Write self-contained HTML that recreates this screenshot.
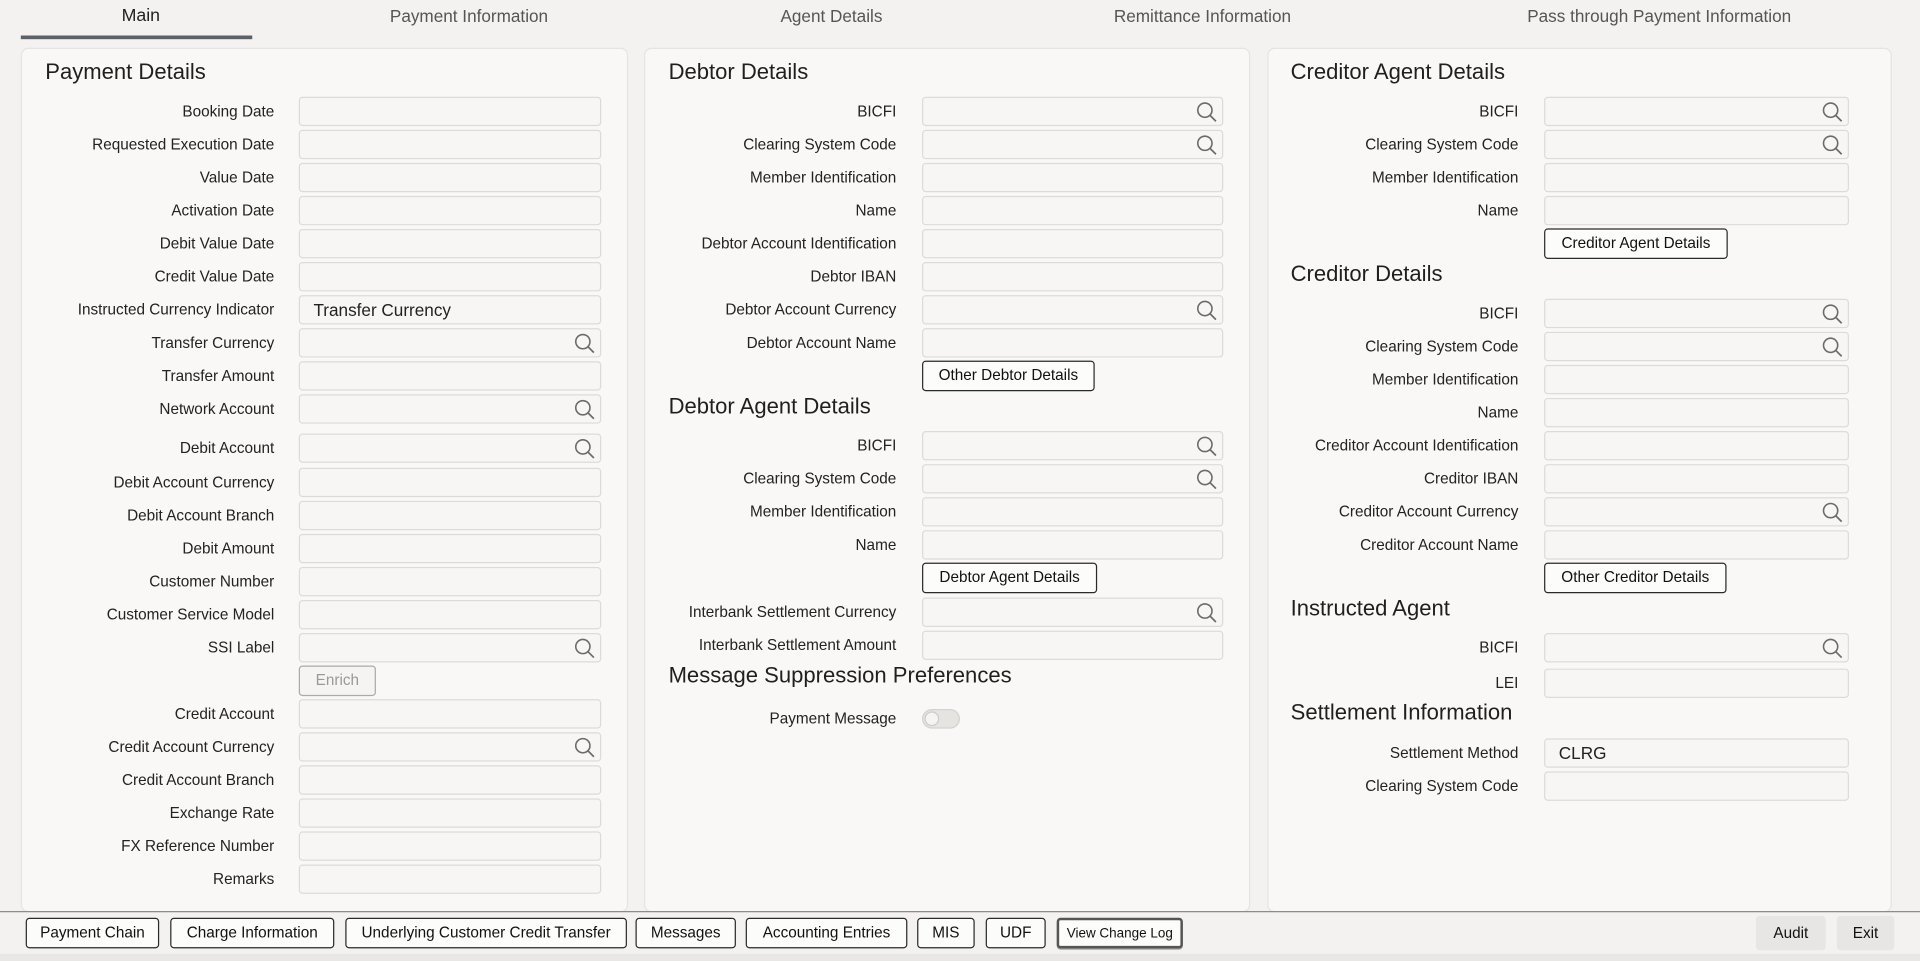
<!DOCTYPE html>
<html><head><meta charset="utf-8"><style>
html,body{margin:0;padding:0;width:1920px;height:961px;overflow:hidden;background:#f3f2f0;font-family:"Liberation Sans",sans-serif;}
#w{position:absolute;left:0;top:0;width:1568px;height:785px;transform:scale(1.22449);transform-origin:0 0;}
.a{position:absolute}
.tab{position:absolute;top:5px;font-size:14px;color:#555;transform:translateX(-50%);white-space:nowrap}
.p{position:absolute;top:39px;height:704px;background:#f9f8f6;border:1px solid #e6e4e0;border-radius:6px}
.h{position:absolute;font-size:18px;color:#1f1f1f;white-space:nowrap;transform:translateY(-50%)}
.l{position:absolute;font-size:12.5px;color:#222;text-align:right;white-space:nowrap;transform:translateY(-50%)}
.i{position:absolute;height:24px;background:#f7f6f4;border:1px solid #dddbd7;border-radius:3px;transform:translateY(-50%);box-sizing:border-box;font-size:14px;color:#222;padding-left:11px;line-height:22px}
.s{position:absolute;right:4px;top:3px;width:17px;height:17px}
.b{position:absolute;height:25px;border:1px solid #2a2a2a;border-radius:3px;background:#fcfcfb;font-size:12.5px;color:#111;text-align:center;line-height:23px;transform:translateY(-50%);box-sizing:border-box;white-space:nowrap}
</style></head><body><div id="w">
<svg width="0" height="0" style="position:absolute"><defs><symbol id="q" viewBox="0 0 17 17"><circle cx="7" cy="7" r="5.8" fill="none" stroke="#6b6b6b" stroke-width="1.3"/><line x1="11.2" y1="11.2" x2="16" y2="16" stroke="#6b6b6b" stroke-width="1.4"/></symbol></defs></svg>
<div class="tab" style="left:115px;color:#222;font-size:14.5px">Main</div>
<div class="a" style="left:17px;top:29px;width:189px;height:3px;background:#5b606b"></div>
<div class="tab" style="left:383px">Payment Information</div>
<div class="tab" style="left:679px">Agent Details</div>
<div class="tab" style="left:982px">Remittance Information</div>
<div class="tab" style="left:1355px">Pass through Payment Information</div>

<div class="p" style="left:17px;width:494px"></div>
<div class="p" style="left:526px;width:493px"></div>
<div class="p" style="left:1035px;width:508px"></div>

<div class="h" style="left:37px;top:59px">Payment Details</div>
<div style="position:absolute;left:0;top:0;width:224px">
<div class="l" style="right:0;top:91px">Booking Date</div>
<div class="l" style="right:0;top:118px">Requested Execution Date</div>
<div class="l" style="right:0;top:145px">Value Date</div>
<div class="l" style="right:0;top:172px">Activation Date</div>
<div class="l" style="right:0;top:199px">Debit Value Date</div>
<div class="l" style="right:0;top:226px">Credit Value Date</div>
<div class="l" style="right:0;top:253px">Instructed Currency Indicator</div>
<div class="l" style="right:0;top:280px">Transfer Currency</div>
<div class="l" style="right:0;top:307px">Transfer Amount</div>
<div class="l" style="right:0;top:334px">Network Account</div>
<div class="l" style="right:0;top:366px">Debit Account</div>
<div class="l" style="right:0;top:394px">Debit Account Currency</div>
<div class="l" style="right:0;top:421px">Debit Account Branch</div>
<div class="l" style="right:0;top:448px">Debit Amount</div>
<div class="l" style="right:0;top:475px">Customer Number</div>
<div class="l" style="right:0;top:502px">Customer Service Model</div>
<div class="l" style="right:0;top:529px">SSI Label</div>
<div class="l" style="right:0;top:583px">Credit Account</div>
<div class="l" style="right:0;top:610px">Credit Account Currency</div>
<div class="l" style="right:0;top:637px">Credit Account Branch</div>
<div class="l" style="right:0;top:664px">Exchange Rate</div>
<div class="l" style="right:0;top:691px">FX Reference Number</div>
<div class="l" style="right:0;top:718px">Remarks</div>
</div>
<div style="position:absolute;left:244px;top:0;width:247px">
<div class="i" style="left:0;width:247px;top:91px"></div>
<div class="i" style="left:0;width:247px;top:118px"></div>
<div class="i" style="left:0;width:247px;top:145px"></div>
<div class="i" style="left:0;width:247px;top:172px"></div>
<div class="i" style="left:0;width:247px;top:199px"></div>
<div class="i" style="left:0;width:247px;top:226px"></div>
<div class="i" style="left:0;width:247px;top:253px">Transfer Currency</div>
<div class="i" style="left:0;width:247px;top:280px"><svg class="s"><use href="#q"/></svg></div>
<div class="i" style="left:0;width:247px;top:307px"></div>
<div class="i" style="left:0;width:247px;top:334px"><svg class="s"><use href="#q"/></svg></div>
<div class="i" style="left:0;width:247px;top:366px"><svg class="s"><use href="#q"/></svg></div>
<div class="i" style="left:0;width:247px;top:394px"></div>
<div class="i" style="left:0;width:247px;top:421px"></div>
<div class="i" style="left:0;width:247px;top:448px"></div>
<div class="i" style="left:0;width:247px;top:475px"></div>
<div class="i" style="left:0;width:247px;top:502px"></div>
<div class="i" style="left:0;width:247px;top:529px"><svg class="s"><use href="#q"/></svg></div>
<div class="b" style="left:0;width:63px;top:556px;border-color:#aaa;color:#999;background:#f5f4f2">Enrich</div>
<div class="i" style="left:0;width:247px;top:583px"></div>
<div class="i" style="left:0;width:247px;top:610px"><svg class="s"><use href="#q"/></svg></div>
<div class="i" style="left:0;width:247px;top:637px"></div>
<div class="i" style="left:0;width:247px;top:664px"></div>
<div class="i" style="left:0;width:247px;top:691px"></div>
<div class="i" style="left:0;width:247px;top:718px"></div>
</div>

<div class="h" style="left:546px;top:59px">Debtor Details</div>
<div class="h" style="left:546px;top:332px">Debtor Agent Details</div>
<div class="h" style="left:546px;top:552px">Message Suppression Preferences</div>
<div style="position:absolute;left:0;top:0;width:732px">
<div class="l" style="right:0;top:91px">BICFI</div>
<div class="l" style="right:0;top:118px">Clearing System Code</div>
<div class="l" style="right:0;top:145px">Member Identification</div>
<div class="l" style="right:0;top:172px">Name</div>
<div class="l" style="right:0;top:199px">Debtor Account Identification</div>
<div class="l" style="right:0;top:226px">Debtor IBAN</div>
<div class="l" style="right:0;top:253px">Debtor Account Currency</div>
<div class="l" style="right:0;top:280px">Debtor Account Name</div>
<div class="l" style="right:0;top:364px">BICFI</div>
<div class="l" style="right:0;top:391px">Clearing System Code</div>
<div class="l" style="right:0;top:418px">Member Identification</div>
<div class="l" style="right:0;top:445px">Name</div>
<div class="l" style="right:0;top:500px">Interbank Settlement Currency</div>
<div class="l" style="right:0;top:527px">Interbank Settlement Amount</div>
<div class="l" style="right:0;top:587px">Payment Message</div>
</div>
<div style="position:absolute;left:753px;top:0;width:246px">
<div class="i" style="left:0;width:246px;top:91px"><svg class="s"><use href="#q"/></svg></div>
<div class="i" style="left:0;width:246px;top:118px"><svg class="s"><use href="#q"/></svg></div>
<div class="i" style="left:0;width:246px;top:145px"></div>
<div class="i" style="left:0;width:246px;top:172px"></div>
<div class="i" style="left:0;width:246px;top:199px"></div>
<div class="i" style="left:0;width:246px;top:226px"></div>
<div class="i" style="left:0;width:246px;top:253px"><svg class="s"><use href="#q"/></svg></div>
<div class="i" style="left:0;width:246px;top:280px"></div>
<div class="b" style="left:0;width:141px;top:307px">Other Debtor Details</div>
<div class="i" style="left:0;width:246px;top:364px"><svg class="s"><use href="#q"/></svg></div>
<div class="i" style="left:0;width:246px;top:391px"><svg class="s"><use href="#q"/></svg></div>
<div class="i" style="left:0;width:246px;top:418px"></div>
<div class="i" style="left:0;width:246px;top:445px"></div>
<div class="b" style="left:0;width:143px;top:472px">Debtor Agent Details</div>
<div class="i" style="left:0;width:246px;top:500px"><svg class="s"><use href="#q"/></svg></div>
<div class="i" style="left:0;width:246px;top:527px"></div>
<div class="a" style="left:0;top:579px;width:31px;height:16px;border-radius:8px;background:#e6e4e1;border:1px solid #d4d2ce;box-sizing:border-box"><div style="position:absolute;left:1px;top:1px;width:12px;height:12px;border-radius:6px;background:#f5f4f2;border:1px solid #ccc;box-sizing:border-box"></div></div>
</div>

<div class="h" style="left:1054px;top:59px">Creditor Agent Details</div>
<div class="h" style="left:1054px;top:224px">Creditor Details</div>
<div class="h" style="left:1054px;top:497px">Instructed Agent</div>
<div class="h" style="left:1054px;top:582px">Settlement Information</div>
<div style="position:absolute;left:0;top:0;width:1240px">
<div class="l" style="right:0;top:91px">BICFI</div>
<div class="l" style="right:0;top:118px">Clearing System Code</div>
<div class="l" style="right:0;top:145px">Member Identification</div>
<div class="l" style="right:0;top:172px">Name</div>
<div class="l" style="right:0;top:256px">BICFI</div>
<div class="l" style="right:0;top:283px">Clearing System Code</div>
<div class="l" style="right:0;top:310px">Member Identification</div>
<div class="l" style="right:0;top:337px">Name</div>
<div class="l" style="right:0;top:364px">Creditor Account Identification</div>
<div class="l" style="right:0;top:391px">Creditor IBAN</div>
<div class="l" style="right:0;top:418px">Creditor Account Currency</div>
<div class="l" style="right:0;top:445px">Creditor Account Name</div>
<div class="l" style="right:0;top:529px">BICFI</div>
<div class="l" style="right:0;top:558px">LEI</div>
<div class="l" style="right:0;top:615px">Settlement Method</div>
<div class="l" style="right:0;top:642px">Clearing System Code</div>
</div>
<div style="position:absolute;left:1261px;top:0;width:249px">
<div class="i" style="left:0;width:249px;top:91px"><svg class="s"><use href="#q"/></svg></div>
<div class="i" style="left:0;width:249px;top:118px"><svg class="s"><use href="#q"/></svg></div>
<div class="i" style="left:0;width:249px;top:145px"></div>
<div class="i" style="left:0;width:249px;top:172px"></div>
<div class="b" style="left:0;width:150px;top:199px">Creditor Agent Details</div>
<div class="i" style="left:0;width:249px;top:256px"><svg class="s"><use href="#q"/></svg></div>
<div class="i" style="left:0;width:249px;top:283px"><svg class="s"><use href="#q"/></svg></div>
<div class="i" style="left:0;width:249px;top:310px"></div>
<div class="i" style="left:0;width:249px;top:337px"></div>
<div class="i" style="left:0;width:249px;top:364px"></div>
<div class="i" style="left:0;width:249px;top:391px"></div>
<div class="i" style="left:0;width:249px;top:418px"><svg class="s"><use href="#q"/></svg></div>
<div class="i" style="left:0;width:249px;top:445px"></div>
<div class="b" style="left:0;width:149px;top:472px">Other Creditor Details</div>
<div class="i" style="left:0;width:249px;top:529px"><svg class="s"><use href="#q"/></svg></div>
<div class="i" style="left:0;width:249px;top:558px"></div>
<div class="i" style="left:0;width:249px;top:615px">CLRG</div>
<div class="i" style="left:0;width:249px;top:642px"></div>
</div>

<div class="a" style="left:0;top:744px;width:1568px;height:1px;background:#8a8a8a"></div>
<div class="a" style="left:0;top:779px;width:1568px;height:6px;background:#e8e7e5"></div>
<div class="b" style="left:21px;width:109px;top:762px">Payment Chain</div>
<div class="b" style="left:139px;width:134px;top:762px">Charge Information</div>
<div class="b" style="left:282px;width:230px;top:762px">Underlying Customer Credit Transfer</div>
<div class="b" style="left:519px;width:82px;top:762px">Messages</div>
<div class="b" style="left:609px;width:132px;top:762px">Accounting Entries</div>
<div class="b" style="left:749px;width:47px;top:762px">MIS</div>
<div class="b" style="left:805px;width:49px;top:762px">UDF</div>
<div class="b" style="left:863px;width:103px;top:762px;font-size:11px;border:2px solid #555;box-shadow:0 1px 0 #999">View Change Log</div>
<div class="b" style="left:1434px;width:57px;top:762px;height:28px;line-height:28px;border:none;background:#e7e6e4">Audit</div>
<div class="b" style="left:1500px;width:47px;top:762px;height:28px;line-height:28px;border:none;background:#e7e6e4">Exit</div>
</div></body></html>
